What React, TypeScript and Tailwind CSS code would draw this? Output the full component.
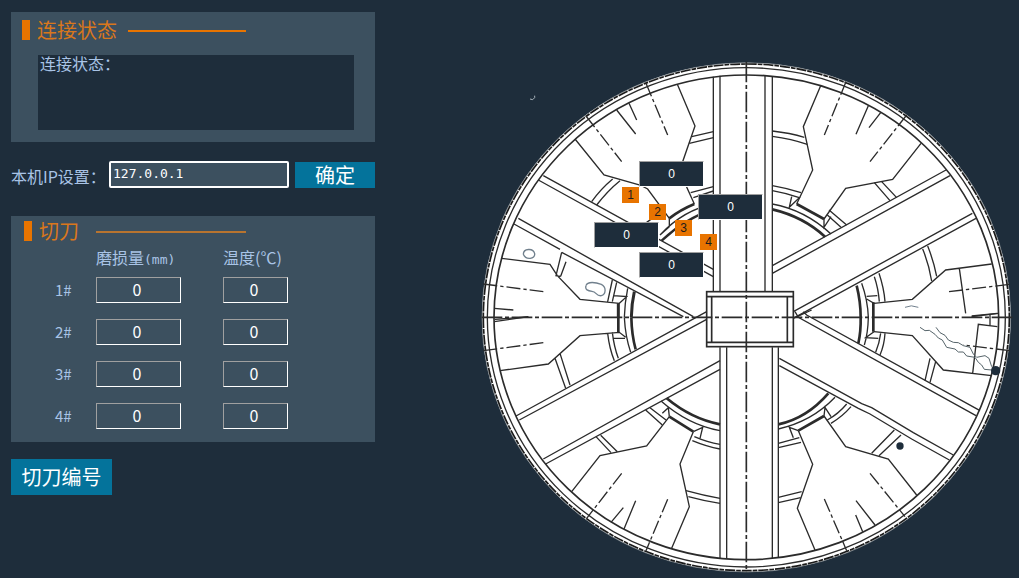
import React, { useState } from "react";
import classNames from "clsx";

interface ISectionTitleProps {
  text: string;
  className?: string;
  lineClassName?: string;
}

interface IFieldProps {
  name: string;
  label: string;
  className?: string;
  variant?: "table" | "overlay";
}

const knives = ["1#", "2#", "3#", "4#"];

// positions inside the 539 x 523 drawing
const readings = [
  { id: 1, x: 159, y: 106 },
  { id: 2, x: 218, y: 139 },
  { id: 3, x: 114, y: 167 },
  { id: 4, x: 159, y: 197 },
];

const markers = [
  { id: 1, x: 142, y: 132 },
  { id: 2, x: 169, y: 149 },
  { id: 3, x: 195, y: 165 },
  { id: 4, x: 220, y: 179 },
];

const place = (x: number, y: number) => ({
  left: `${(x / 539) * 100}%`,
  top: `${(y / 523) * 100}%`,
});

const SectionTitle = ({ text, className, lineClassName }: ISectionTitleProps) => (
  <div className={classNames("flex h-5 items-center", className)}>
    <span className="h-5 w-2 bg-[#e87400]" />
    <h2 className="ml-[7px] text-xl leading-5 text-[#d9771c]">{text}</h2>
    <span className={classNames("mt-[2px] h-[2px]", lineClassName)} />
  </div>
);

const Field = ({ name, label, className, variant = "table" }: IFieldProps) => {
  const [value, setValue] = useState("0");
  const fieldStyle = classNames(
    "block rounded-none border border-t-[#a0a0a0] border-l-[#a0a0a0] border-r-white border-b-white text-center text-white outline-none",
    {
      "h-[26px] bg-transparent pr-[3px] pb-[2px] text-base leading-4": variant === "table",
      "h-[26px] w-[65px] bg-[#1e2d3b] font-['Liberation_Sans',sans-serif] text-xs": variant === "overlay",
    },
    className
  );
  return <input type="text" name={name} aria-label={label} value={value} onChange={(e) => setValue(e.target.value)} className={fieldStyle} />;
};

const CutterHead = () => (
  <svg viewBox="0 0 1617 1569" className="block h-auto w-full" fill="none" stroke="#2b2b2b" strokeWidth="4" role="img" aria-label="刀盘">
    <ellipse cx="799" cy="787" rx="793" ry="764" fill="#fff" stroke="#8d9499" strokeWidth="2" />
    <ellipse cx="799" cy="787" rx="789" ry="760" stroke="#1a1a1a" strokeWidth="5" strokeDasharray="30 3 14 3" />
    <ellipse cx="799" cy="787" rx="777" ry="749" strokeWidth="4" />
    <ellipse cx="799" cy="787" rx="757" ry="727" strokeWidth="5" />

    {/* upper left */}
    <g>
      <path d="M700 65V710M720 62V710" />
      <path d="M592 88L645 213L608 320L620 396L643 447M285 252L372 360L480 390L503 402L568 490" />
      <path d="M568 490Q600 465 643 447" strokeWidth="8" />
      <path d="M190 362L700 643M175 375L700 665M115 490L360 628L640 785M102 507L240 583M245 592L610 785" />
      <path d="M635 245L700 230M628 265L700 248M632 413L700 395M640 428L700 408M335 440Q362 402 398 372M350 450Q382 408 420 377" />
      <path d="M540 540Q610 465 700 447M568 490V515M568 515L540 540M500 502L520 488" />
      <path d="M545 557Q615 490 700 463" strokeWidth="7" />
      <path d="M410 165L467 237M447 145L470 195M43 760L100 765M45 793L145 786" />
      <path d="M65 610L210 628L232 662L300 733L418 745L440 725L400 722M245 592L228 662L242 664M258 620L242 664M397 675L383 740M410 682L397 740M443 700Q434 745 433 787" />
      <path d="M463 710Q455 745 454 787M415 745V787" strokeWidth="9" />
      <path d="M498 85L563 240M318 183L425 320M10 687L190 710" strokeDasharray="42 9 10 9" />
      <path d="M130 598C130 580 160 578 164 596C166 612 138 617 130 598M318 692C322 678 348 682 364 688C380 696 378 718 364 722C348 724 350 710 336 709C324 708 314 704 318 692" stroke="#71808d" />
    </g>

    {/* upper right */}
    <g transform="translate(795 0)">
      <path d="M60 62V710M82 65V710" />
      <path d="M227 92L175 215L203 345L155 447M237 492L302 400L443 373L528 265" />
      <path d="M155 447L237 492" strokeWidth="8" />
      <path d="M82 228Q135 234 178 247M82 244Q140 252 187 268M82 392Q128 400 168 413M82 407Q122 414 163 428L133 457L140 425" />
      <path d="M82 447Q180 465 258 537M237 492V517L258 485M252 465L305 510M247 480L288 517" />
      <path d="M82 463Q175 485 240 545" strokeWidth="8" />
      <path d="M82 632L603 345M82 655L615 362M145 770L682 475M150 787L693 490" />
      <path d="M388 383L435 437M410 380L455 428M533 582Q552 628 560 678M548 573Q566 618 575 664M388 665Q400 700 403 740M402 655Q417 700 420 740" />
      <path d="M350 685Q368 735 370 787M365 724L397 722M365 732L387 745L502 733L602 645L740 627M643 640L662 775M680 785L760 775" />
      <path d="M335 692Q347 740 347 787M385 742V787" strokeWidth="8" />
      <path d="M370 152L333 238M407 173L372 218" />
      <path d="M303 80L238 240M485 180L375 320M612 710L795 688" strokeDasharray="42 9 10 9" />
      <path d="M480 757Q498 748 520 757" stroke="#71808d" strokeWidth="3" />
    </g>

    {/* lower left */}
    <g transform="translate(0 765)">
      <path d="M720 112V745M740 112V747" />
      <path d="M108 318L680 5M118 330L680 28M190 447L720 152M197 462L720 178" />
      <path d="M60 182L205 162L300 77L418 67L437 82M400 85H435M225 145L257 235M240 130L270 225M383 70Q388 115 403 152M397 67Q402 110 415 145M433 22Q436 80 452 127" />
      <path d="M454 22Q455 75 467 118M415 22V67M568 320L640 365M560 265Q635 327 720 343" strokeWidth="8" />
      <path d="M275 545L360 437L500 408L568 320M640 365L600 462L628 590L575 715" />
      <path d="M348 380L393 428M362 376L412 425M497 300L547 345M510 293L558 330M543 273Q625 345 720 362M547 310L565 293L568 320M640 365L668 352L660 385" />
      <path d="M637 392Q680 410 720 417M643 380Q682 397 720 403M618 542Q668 556 720 565M625 560Q672 573 720 580" />
      <path d="M43 35L145 20M430 593L393 637M467 572L432 657" />
      <path d="M10 122L190 98M425 490L320 625M563 568L498 722" strokeDasharray="42 9 10 9" />
    </g>

    {/* lower right */}
    <g transform="translate(795 765)">
      <path d="M82 112V745M100 112V743" />
      <path d="M150 5L160 22L693 317M175 5L185 15L705 302M145 25L200 0M103 145L350 281L380 293L505 368L625 435M103 167L340 295L375 312L500 387L613 450" />
      <path d="M387 65L502 77L595 180L740 197M757 50L700 43L683 190M735 15V47M680 18L757 10" />
      <path d="M555 145L540 212M572 155L555 217M407 70Q403 100 392 127M420 70Q418 105 405 135M370 22Q369 70 358 105M387 65L362 83L400 85" />
      <path d="M347 22Q348 65 340 100M385 22V65M160 362L237 318M100 343Q185 325 250 250" strokeWidth="8" />
      <path d="M210 720L157 595L203 463L160 362M237 318L302 410L430 447L515 555" />
      <path d="M100 357Q200 335 270 262M160 362L133 352L145 383M100 400L163 383M100 413L168 397M237 318L240 292L258 320M247 330Q280 312 305 282M258 340Q292 320 318 290" />
      <path d="M380 430L448 360M402 437L468 375M100 562L170 545M100 578L167 563M333 572L390 645M332 615L353 665" />
      <path d="M375 490L480 620M238 567L305 722M795 122L655 105" strokeDasharray="42 9 10 9" />
      <path d="M525 52L540 62L553 61L570 73L580 84L592 90L605 112L630 117L640 126L655 126L665 138L690 142L700 157L710 165L718 178L740 180M573 52L585 68L600 76L610 90L625 97L640 98L655 107L675 112L685 132L695 142L720 137L732 145L740 170" stroke="#56646a" strokeWidth="3" />
      <circle cx="465" cy="408" r="11" fill="#1e2d3b" stroke="none" />
      <circle cx="752" cy="182" r="14" fill="#1e2d3b" stroke="none" />
    </g>

    {/* hub */}
    <rect x="680" y="710" width="260" height="165" fill="#fff" strokeWidth="5" />
    <path d="M680 725H940M680 862H940M695 725V862M922 725V862" strokeWidth="5" />

    {/* centre lines */}
    <path d="M5 787H1597M799 20V1552" strokeWidth="5" strokeDasharray="62 8 12 8" />
    <path d="M150 132L158 134L164 128V122" stroke="#a9b4bc" strokeWidth="3" />
  </svg>
);

const App = () => {
  const [ip, setIp] = useState("127.0.0.1");

  return (
    <main className="flex min-h-screen items-start bg-[#1e2d3b] font-['Noto_Sans_CJK_SC',sans-serif] text-base text-[#a9c4e6]">
      <div className="mt-3 ml-[11px] w-[364px] shrink-0">
        <section className="bg-[#3c505f] px-[11px] pt-2 pb-3">
          <SectionTitle text="连接状态" lineClassName="ml-[11px] w-[118px] bg-[#e87400]" />
          <div className="mt-[15px] mr-[10px] ml-4 h-[75px] bg-[#1e2d3b] px-[2px] text-base leading-4">连接状态：</div>
        </section>

        <form className="mt-[19px] flex items-center" onSubmit={(e) => e.preventDefault()}>
          <label htmlFor="ip" className="w-[98px] whitespace-nowrap pt-[2px] leading-5">本机IP设置：</label>
          <input
            id="ip"
            name="ip"
            type="text"
            value={ip}
            onChange={(e) => setIp(e.target.value)}
            className="h-[27px] min-w-0 flex-1 rounded-xs border-2 border-white bg-[#3c505f] px-[2px] pb-[2px] font-['DejaVu_Sans_Mono',monospace] text-[13px] text-white outline-none"
          />
          <button type="submit" className="ml-[6px] h-[26px] w-20 bg-[#04739b] text-xl leading-5 text-white">确定</button>
        </form>

        <section className="mt-7 bg-[#3c505f] pt-[5px] pb-[5px]">
          <SectionTitle text="切刀" className="pl-[13px]" lineClassName="ml-[17px] w-[150px] bg-[#b8742f]" />
          <table className="mt-1 w-full table-fixed border-collapse text-left">
            <thead>
              <tr className="h-6 align-baseline">
                <th className="w-[85px]" aria-label="切刀" />
                <th className="w-[127px] p-0 font-normal leading-6">
                  磨损量<span className="font-['DejaVu_Sans_Mono',monospace] text-[13px] leading-4">(mm)</span>
                </th>
                <th className="p-0 font-normal leading-6">温度(℃)</th>
              </tr>
            </thead>
            <tbody>
              {knives.map((knife) => (
                <tr key={knife} className="h-[42px]">
                  <th scope="row" className="p-0 pl-11 text-[15px] font-normal leading-4">{knife}</th>
                  <td className="p-0"><Field name={`wear-${knife}`} label={`${knife} 磨损量`} className="w-[85px]" /></td>
                  <td className="p-0"><Field name={`temp-${knife}`} label={`${knife} 温度`} className="w-[65px]" /></td>
                </tr>
              ))}
            </tbody>
          </table>
        </section>

        <button type="button" className="mt-[17px] h-9 w-[101px] bg-[#04739b] text-xl leading-5 text-white">切刀编号</button>
      </div>

      <section className="relative mt-[55px] ml-[105px] min-w-0 flex-1">
        <CutterHead />
        {readings.map(({ id, x, y }) => (
          <div key={id} className="absolute" style={place(x, y)}>
            <Field name={`reading-${id}`} label={`${id}#`} variant="overlay" />
          </div>
        ))}
        {markers.map(({ id, x, y }) => (
          <span key={id} className="absolute flex h-4 w-[17px] items-center justify-center bg-[#e87400] font-['Liberation_Sans',sans-serif] text-xs text-[#1c1c1c]" style={place(x, y)}>
            {id}
          </span>
        ))}
      </section>
    </main>
  );
};

export default App;
